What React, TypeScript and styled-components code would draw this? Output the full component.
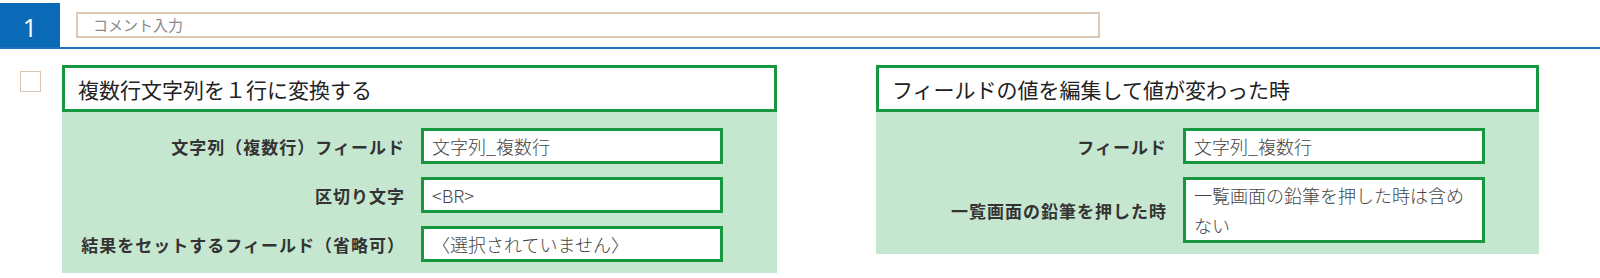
import React from "react";
import styled, { createGlobalStyle } from "styled-components";

const GlobalStyle = createGlobalStyle`
    body {
        margin: 0;
        background: #fff;
        font-family: "Noto Sans CJK JP", "Noto Sans", sans-serif;
    }
`;

interface Field {
    label: string;
    value: string;
}

interface Action {
    title: string;
    labelWidth: number;
    fields: Field[];
}

const actions: Action[] = [
    {
        title: "複数行文字列を１行に変換する",
        labelWidth: 325,
        fields: [
            { label: "文字列（複数行）フィールド", value: "文字列_複数行" },
            { label: "区切り文字", value: "<BR>" },
            { label: "結果をセットするフィールド（省略可）", value: "〈選択されていません〉" },
        ],
    },
    {
        title: "フィールドの値を編集して値が変わった時",
        labelWidth: 273,
        fields: [
            { label: "フィールド", value: "文字列_複数行" },
            { label: "一覧画面の鉛筆を押した時", value: "一覧画面の鉛筆を押した時は含めない" },
        ],
    },
];

const App: React.FC = () => {
    return (
        <Page>
            <GlobalStyle />
            <Header>
                <Number>1</Number>
                <Comment>コメント入力</Comment>
            </Header>
            <Content>
                <Check />
                {actions.map((a, i) => (
                    <Card key={i} $first={i === 0} $width={i === 0 ? 715 : 663}>
                        <Title>{a.title}</Title>
                        <Body>
                            {a.fields.map((f, j) => (
                                <Row key={j} $labelWidth={a.labelWidth}>
                                    <Label>{f.label}</Label>
                                    <Value>{f.value}</Value>
                                </Row>
                            ))}
                        </Body>
                    </Card>
                ))}
            </Content>
        </Page>
    );
};

const Page = styled.div`
    padding-top: 3px;
    width: 1600px;
`;

const Header = styled.div`
    display: flex;
    align-items: center;
    height: 44px;
    border-bottom: 2px solid #1f70bf;
`;

const Number = styled.div`
    width: 60px;
    height: 100%;
    background: #0a6ab8;
    color: #fff;
    font-family: "Open Sans", sans-serif;
    font-size: 25px;
    display: flex;
    align-items: center;
    justify-content: center;
    padding-top: 3px;
    box-sizing: border-box;
`;

const Comment = styled.div`
    margin-left: 16px;
    width: 1024px;
    height: 26px;
    box-sizing: border-box;
    border: 2px solid #dcc9b5;
    padding-left: 15px;
    font-size: 15px;
    line-height: 22px;
    color: #8a8a8a;
`;

const Content = styled.div`
    display: flex;
    align-items: flex-start;
    padding-top: 16px;
`;

const Check = styled.div`
    margin: 6px 0 0 20px;
    width: 21px;
    height: 21px;
    box-sizing: border-box;
    border: 1.5px solid #d9c6b2;
`;

const Card = styled.div<{ $first: boolean; $width: number }>`
    margin-left: ${(p) => (p.$first ? 21 : 99)}px;
    width: ${(p) => p.$width}px;
`;

const Title = styled.div`
    height: 47px;
    box-sizing: border-box;
    border: 3px solid #17973f;
    background: #fff;
    padding-left: 13px;
    display: flex;
    align-items: center;
    font-size: 21px;
    color: #222;
`;

const Body = styled.div`
    background: #c5e6cf;
    padding: 16px 54px 11px 18px;
    display: flex;
    flex-direction: column;
    gap: 13px;
`;

const Row = styled.div<{ $labelWidth: number }>`
    display: grid;
    grid-template-columns: ${(p) => p.$labelWidth}px 302px;
    column-gap: 16px;
    align-items: center;
`;

const Label = styled.div`
    text-align: right;
    font-size: 17px;
    letter-spacing: 1px;
    font-weight: 700;
    color: #333;
`;

const Value = styled.div`
    box-sizing: border-box;
    border: 3px solid #17973f;
    background: #fff;
    padding: 0 8px;
    font-size: 18px;
    font-weight: 300;
    line-height: 30px;
    color: #444;
`;

export default App;
